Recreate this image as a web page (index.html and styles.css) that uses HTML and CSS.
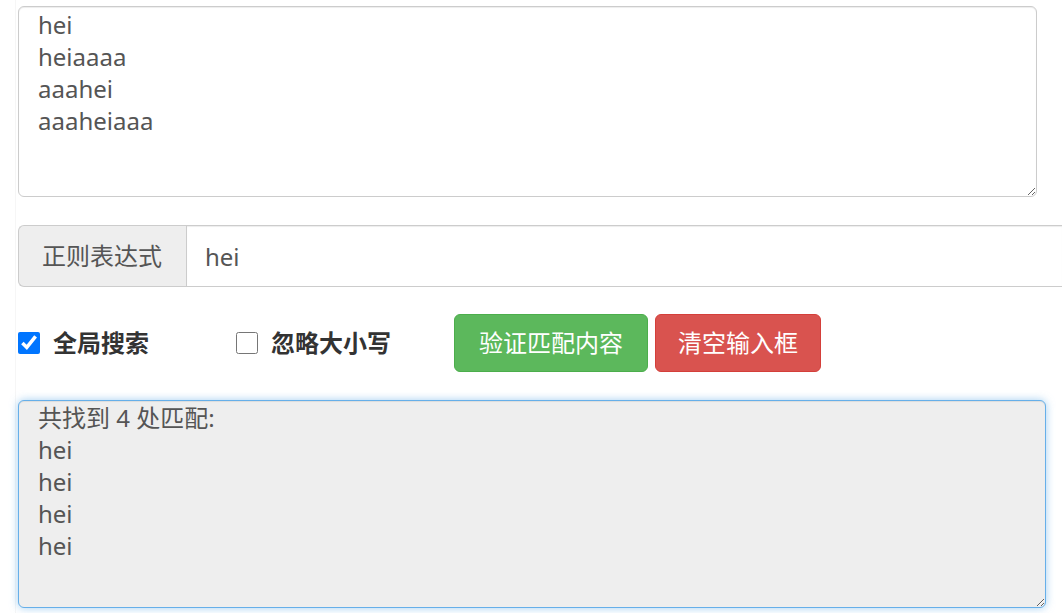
FILE: index.html
```html
<!DOCTYPE html>
<html>
  <head>
    <meta charset="utf-8">
    <title>正则表达式测试</title>
    <link rel="stylesheet" href="styles.css">
  </head>
  <body>
    <div class="page">
      <textarea class="form-control source" rows="5">hei
heiaaaa
aaahei
aaaheiaaa</textarea>

      <div class="input-group">
        <span class="addon">正则表达式</span>
        <input class="form-control pattern" type="text" value="hei">
      </div>

      <div class="options">
        <label class="check"><input type="checkbox" checked> 全局搜索</label>
        <label class="check"><input type="checkbox"> 忽略大小写</label>
        <button class="btn btn-success">验证匹配内容</button>
        <button class="btn btn-danger">清空输入框</button>
      </div>

      <textarea class="form-control result" rows="6" readonly>共找到 4 处匹配:
hei
hei
hei
hei</textarea>
    </div>
  </body>
</html>
```

FILE: styles.css
```css
html, body {margin:0; background:#fff; overflow:hidden;}
body {font-family:"Noto Sans","Noto Sans CJK SC",sans-serif; font-size:24px; line-height:32px; color:#333;}
.page {margin-left:15px; padding:6px 0 0 2px; border-left:1px solid #f6f6f6; min-height:613px; box-sizing:border-box;}

.form-control {display:block; box-sizing:border-box; font:inherit; color:#555; background:#fff; border:1px solid #ccc; border-radius:6px; box-shadow:inset 0 1px 1px rgba(0,0,0,.075); outline:none;}
.source {width:1019px; height:191px; padding:2px 19px; margin:0 0 28px;}
.result {width:1028px; height:208px; padding:1px 19px; background:#eee; border-color:#66afe9; box-shadow:inset 0 1px 1px rgba(0,0,0,.075), 0 0 8px rgba(102,175,233,.6);}

/* the pattern field runs on past the window edge */
.input-group {display:flex; margin-bottom:27px;}
.addon {padding:14px 24px 14px 23px; background:#eee; color:#555; border:1px solid #ccc; border-right:0; border-radius:6px 0 0 6px;}
.pattern {flex:1; min-width:0; height:62px; padding:14px 18px; border-right:0; border-radius:0;}

.options {display:flex; align-items:center; margin-bottom:28px;}
.check {display:flex; align-items:center; width:218px; font-weight:bold; color:#333;}
.check input {width:22px; height:22px; margin:0 13px 0 0;}
.check + .check {width:auto; margin-right:63px;}
.btn {font:inherit; line-height:32px; color:#fff; padding:12px 24px; border:1px solid transparent; border-radius:6px; margin-right:7px; cursor:pointer;}
.btn-success {background:#5cb85c; border-color:#4cae4c;}
.btn-danger {background:#d9534f; border-color:#d43f3a; padding:12px 22px;}
```
